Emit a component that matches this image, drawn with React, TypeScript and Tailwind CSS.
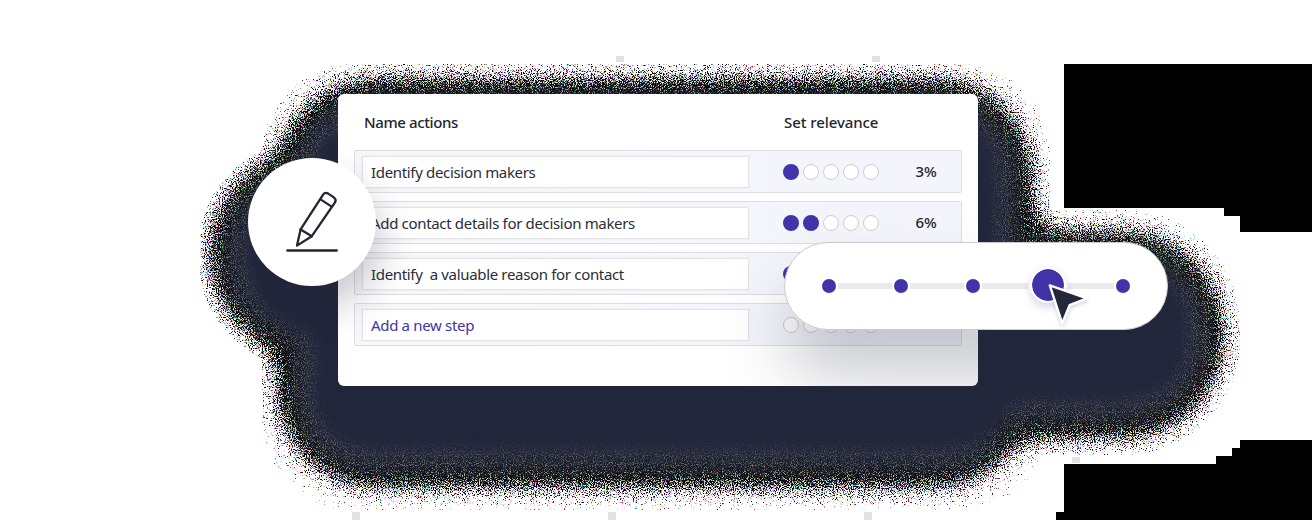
import React from "react";

type Action = { label: string; level: number; percent?: string; placeholder?: boolean };

const actions: Action[] = [
  { label: "Identify decision makers", level: 1, percent: "3%" },
  { label: "Add contact details for decision makers", level: 2, percent: "6%" },
  { label: "Identify\u00a0 a valuable reason for contact", level: 4 },
  { label: "Add a new step", level: 0, placeholder: true },
];

function Blobs({ fill, inset = 0 }: { fill: string; inset?: number }) {
  return (
    <g fill={fill}>
      <rect x={274 + inset} y={76 + inset} width={762 - 2 * inset} height={414 - 2 * inset} rx={100 - inset} />
      <circle cx="313" cy="254" r={107 - inset} />
      <rect x={696 + inset} y={228 + inset} width={532 - 2 * inset} height={213 - 2 * inset} rx={106 - inset} />
    </g>
  );
}

function Backdrop() {
  return (
    <svg className="absolute inset-0 h-[520px] w-[1316px]" viewBox="0 0 1316 520" aria-hidden="true">
      <defs>
        <filter id="grain" filterUnits="userSpaceOnUse" x="0" y="0" width="1316" height="520" colorInterpolationFilters="sRGB">
          <feGaussianBlur in="SourceGraphic" stdDeviation="18" result="soft" />
          <feTurbulence type="fractalNoise" baseFrequency="0.93 0.87" numOctaves="2" seed="11" />
          <feColorMatrix
            type="matrix"
            values="0.4 1.6 0 0 -0.45  0 1.75 0 0.25 -0.45  0 1.6 0.4 0 -0.45  0 0 0 0 1"
            result="noise"
          />
          <feComposite in="soft" in2="noise" operator="arithmetic" k1="0" k2="0.5" k3="0.5" k4="0" />
          <feComponentTransfer>
            <feFuncR type="linear" slope="8" intercept="-3.4" />
            <feFuncG type="linear" slope="8" intercept="-3.4" />
            <feFuncB type="linear" slope="8" intercept="-3.4" />
          </feComponentTransfer>
        </filter>
        <filter id="soften" filterUnits="userSpaceOnUse" x="0" y="0" width="1316" height="520">
          <feGaussianBlur stdDeviation="11" />
        </filter>
        <filter id="fine" filterUnits="userSpaceOnUse" x="0" y="0" width="1316" height="520" colorInterpolationFilters="sRGB">
          <feTurbulence type="fractalNoise" baseFrequency="0.9" numOctaves="2" seed="4" />
          <feColorMatrix type="matrix" values="0 0 0 0 0.62  0 0 0 0 0.62  0 0 0 0 0.58  2.6 0 0 0 -1.25" result="dust" />
          <feGaussianBlur in="SourceAlpha" stdDeviation="8" result="area" />
          <feComposite in="dust" in2="area" operator="in" />
        </filter>
        <clipPath id="bounds">
          <path d="M200 64H1056V208H1240V456H1056V512H200Z" />
        </clipPath>
        <clipPath id="reach">
          <rect x="262" y="64" width="788" height="446" rx="90" />
          <circle cx="313" cy="254" r="116" />
          <rect x="690" y="210" width="550" height="245" rx="115" />
        </clipPath>
      </defs>
      <g clipPath="url(#bounds)">
        <g clipPath="url(#reach)">
          <g filter="url(#grain)">
            <rect x="-100" y="-100" width="1516" height="720" fill="#fff" />
            <Blobs fill="#000" />
          </g>
          <g filter="url(#soften)">
            <Blobs fill="#24283b" inset={19} />
          </g>
          <g filter="url(#fine)" fill="none" stroke="#000" strokeWidth="22">
            <path d="M378 103H936Q1009 103 1009 180V240H1100Q1200 246 1200 334Q1200 414 1110 414H1020Q1000 462 930 463H380Q302 460 301 390V345Q233 320 233 254Q234 185 302 162Q310 112 378 103Z" />
          </g>
        </g>
      </g>
      <path d="M1064 64H1312V232H1240V216H1224V208H1064Z" fill="#000" />
      <path d="M1240 440H1312V520H1056V512H1064V464H1216V456H1232V448H1240Z" fill="#000" />
      <path
        d="M616 56h8v6h-8zM872 56h8v6h-8zM352 512h8v8h-8zM608 512h8v8h-8zM864 512h8v8h-8zM1072 457h8v6h-8z"
        fill="#e2e2e3"
      />
    </svg>
  );
}

function Rating({ level }: { level: number }) {
  return (
    <div className="flex w-[96px] gap-1">
      {[0, 1, 2, 3, 4].map((i) => (
        <span
          key={i}
          className={
            i < level
              ? "h-4 w-4 rounded-full bg-[#4134a8]"
              : "h-4 w-4 rounded-full border border-[#cfcfd3] bg-white"
          }
        />
      ))}
    </div>
  );
}

function ActionRow({ action }: { action: Action }) {
  return (
    <div className="flex h-[43px] items-center rounded-[2px] border border-[#dcdde3] bg-gradient-to-r from-[#f8f8fa] to-[#f3f4fc] pl-[7px]">
      <div className="flex h-[32px] w-[387px] items-center border border-[#e3e4e8] bg-white pl-[8px] pt-[2px] outline outline-1 outline-[#f0f1f4]">
        <span
          className={
            action.placeholder
              ? "whitespace-pre text-[15px] tracking-[-0.33px] text-[#4134a8]"
              : "whitespace-pre text-[15px] tracking-[-0.33px] text-[#2b2d36]"
          }
        >
          {action.label}
        </span>
      </div>
      <div className="ml-[34px]">
        <Rating level={action.level} />
      </div>
      <span className="ml-[36.5px] text-[15px] font-medium tracking-[-0.1px] text-[#23252f]">{action.percent}</span>
    </div>
  );
}

function PencilBadge() {
  return (
    <div className="absolute left-[248px] top-[158px] h-[128px] w-[128px] rounded-full bg-white shadow-[6px_22px_40px_-4px_rgba(35,40,59,0.28)]">
      <svg
        className="h-full w-full"
        viewBox="248 158 128 128"
        fill="none"
        stroke="#23252f"
        strokeWidth="2.3"
        strokeLinecap="round"
        strokeLinejoin="round"
      >
        <path d="M287.3 250.5H336.8" />
        <path d="M300.6 229.4L323.1 194.6Q325 192 327.8 193.4L333.8 197.4Q336.5 199.5 335.2 202.2L311.8 236.2L297 245.6Z" />
        <path d="M300.6 229.4L311.8 236.2" />
        <path d="M320.6 199.4L331.6 206.6" />
      </svg>
    </div>
  );
}

function Dot() {
  return <span className="h-[14px] w-[14px] shrink-0 rounded-full bg-[#4134a8]" />;
}

function RelevanceSlider() {
  const track = "mx-[2px] h-[6px] shrink-0 bg-[#e8eaec]";
  return (
    <div className="absolute left-[784px] top-[242px] flex h-[88px] w-[384px] items-center rounded-full border border-[#c9c9cd] bg-white pl-[37px]">
      <Dot />
      <span className={`${track} w-[54px]`} />
      <Dot />
      <span className={`${track} w-[53.5px]`} />
      <Dot />
      <span className={`${track} w-[46.5px]`} />
      <span className="relative top-[-1px] h-[36px] w-[36px] shrink-0 rounded-full border-2 border-white bg-[#4134a8] bg-clip-padding shadow-[0_4px_8px_rgba(65,52,168,0.22)]" />
      <span className={`${track} w-[45.5px]`} />
      <Dot />
      <svg
        className="absolute left-[255px] top-[33px] h-[60px] w-[60px] drop-shadow-[0_2px_2px_rgba(35,40,59,0.2)]"
        viewBox="1040 276 60 60"
      >
        <path
          d="M1049.8 285.4L1087 298.4L1069.6 305.2L1062.2 323.4Z"
          fill="#23283b"
          stroke="#fff"
          strokeWidth="2.4"
          strokeLinejoin="round"
        />
      </svg>
    </div>
  );
}

export default function App() {
  return (
    <main className="relative h-[520px] w-[1316px] overflow-hidden bg-white pl-[338px] pt-[94px] font-['Noto_Sans',sans-serif]">
      <Backdrop />
      <section className="relative h-[292px] w-[640px] overflow-hidden rounded-[6px] bg-white px-4">
        <header className="flex h-14 items-center pl-[10px] text-[15px] font-medium text-[#23252f]">
          <h2 className="w-[420px] tracking-[-0.38px]">Name actions</h2>
          <h2 className="tracking-[-0.08px]">Set relevance</h2>
        </header>
        <div className="flex flex-col gap-2">
          {actions.map((action) => (
            <ActionRow key={action.label} action={action} />
          ))}
        </div>
        <div className="absolute left-[446px] top-[148px] h-[88px] w-[384px] rounded-full shadow-[0_44px_64px_rgba(35,40,59,0.25)]" />
      </section>
      <PencilBadge />
      <RelevanceSlider />
    </main>
  );
}
